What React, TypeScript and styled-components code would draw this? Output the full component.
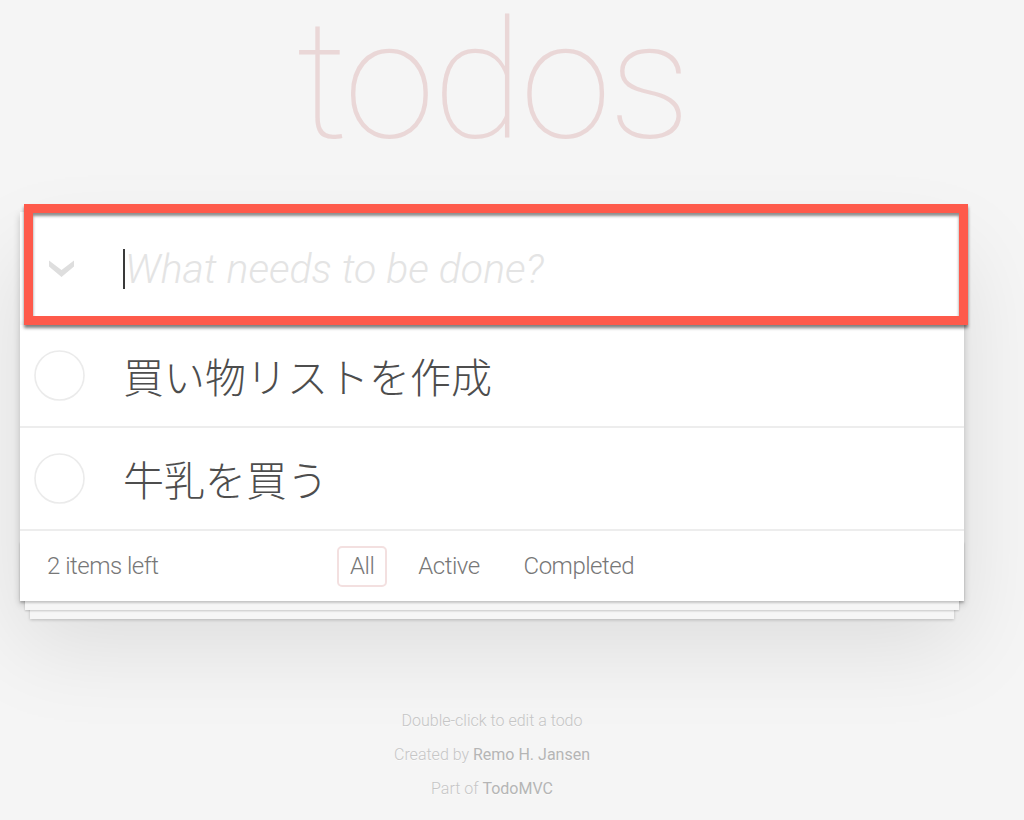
import React from "react";
import styled, { createGlobalStyle } from "styled-components";

const Global = createGlobalStyle`
  html, body { margin: 0; padding: 0; }
  body {
    background: #f5f5f5;
    font-family: "Roboto", "Noto Sans CJK JP", sans-serif;
    font-weight: 300;
    color: #4d4d4d;
    width: 1024px;
    height: 820px;
    overflow: hidden;
    -webkit-font-smoothing: antialiased;
  }
`;

const Page = styled.div`
  width: 944px;
  margin-left: 20px;
  display: flex;
  flex-direction: column;
`;

const Title = styled.h1`
  margin: 0 0 50px;
  height: 162px;
  font-size: 166px;
  line-height: 162px;
  letter-spacing: -3px;
  font-weight: 100;
  text-align: center;
  color: rgba(175, 47, 47, 0.15);
`;

const TodoApp = styled.section`
  position: relative;
  background: #fff;
  box-shadow: 0 3px 7px 0 rgba(0, 0, 0, 0.2), 0 43px 86px 0 rgba(0, 0, 0, 0.1);
`;

const Header = styled.header`
  position: relative;
  height: 113px;
  display: flex;
  align-items: center;
  box-shadow: inset 0 -4px 3px rgba(0, 0, 0, 0.03);
`;

const Highlight = styled.div`
  position: absolute;
  left: 4px;
  top: -8px;
  width: 944px;
  height: 121px;
  box-sizing: border-box;
  border: 9px solid #fe5a4b;
  box-shadow: 0 3px 3px rgba(0, 0, 0, 0.5), inset 0 3px 3px rgba(0, 0, 0, 0.45);
  pointer-events: none;
`;

const ToggleAll = styled.span`
  display: flex;
  width: 27px;
  height: 19px;
  margin-left: 28px;
  margin-right: 48px;
`;

const Caret = styled.span`
  width: 2px;
  height: 40px;
  background: #3a3a3a;
  margin-right: 0;
`;

const Placeholder = styled.span`
  font-size: 41px;
  font-style: italic;
  font-weight: 300;
  color: #e4e4e4;
`;

const List = styled.ul`
  margin: 0;
  padding: 0;
  list-style: none;
`;

const Item = styled.li`
  box-sizing: border-box;
  height: 103px;
  display: flex;
  align-items: center;
  border-bottom: 2px solid #ededed;
`;

const Toggle = styled.span`
  display: flex;
  width: 51px;
  height: 51px;
  margin-left: 14px;
  margin-right: 38px;
`;

const Label = styled.label`
  font-family: "Noto Sans CJK JP", sans-serif;
  font-size: 41px;
  font-weight: 300;
  color: #4d4d4d;
  line-height: 1.2;
`;

const Footer = styled.footer`
  position: relative;
  box-sizing: border-box;
  height: 70px;
  padding: 0 27px;
  display: grid;
  grid-template-columns: 1fr auto 1fr;
  align-items: center;
  color: #777;
  font-size: 24px;
  &::before {
    content: "";
    position: absolute;
    left: 0;
    right: 0;
    bottom: 0;
    height: 60px;
    box-shadow: 0 2px 2px rgba(0, 0, 0, 0.2), 0 14px 0 -5px #f6f6f6,
      0 15px 2px -5px rgba(0, 0, 0, 0.2), 0 28px 0 -10px #f6f6f6,
      0 29px 3px -10px rgba(0, 0, 0, 0.2);
    pointer-events: none;
  }
`;

const Count = styled.span`
  position: relative;
  letter-spacing: -0.5px;
`;

const Filters = styled.ul`
  position: relative;
  margin: 0;
  padding: 0;
  list-style: none;
  display: flex;
  gap: 18px;
  letter-spacing: -0.5px;
`;

const FilterLink = styled.a<{ $selected?: boolean }>`
  display: block;
  padding: 4px 11px;
  line-height: 29px;
  color: inherit;
  text-decoration: none;
  border: 2px solid ${(p) => (p.$selected ? "rgba(175, 47, 47, 0.15)" : "transparent")};
  border-radius: 5px;
`;

const Info = styled.footer`
  margin-top: 111px;
  display: flex;
  flex-direction: column;
  align-items: center;
  gap: 17px;
  font-size: 16px;
  line-height: 17px;
  color: #c6c6c6;
  text-shadow: 0 1px 0 rgba(255, 255, 255, 0.5);
`;

const InfoLine = styled.p`
  margin: 0;
`;

const InfoLink = styled.a`
  color: #b5b5b5;
  font-weight: 400;
  text-decoration: none;
`;

const Chevron = () => (
  <svg width="27" height="19" viewBox="0 0 27 19">
    <path d="M1 1.5 L13.5 11 L26 1.5 L26 7.5 L13.5 18 L1 7.5 Z" fill="#dedede" />
  </svg>
);

const Circle = () => (
  <svg width="51" height="51" viewBox="0 0 51 51">
    <circle cx="25.5" cy="25.5" r="24.5" fill="none" stroke="#ebebeb" strokeWidth="1.6" />
  </svg>
);

const todos = ["買い物リストを作成", "牛乳を買う"];

export default function App() {
  return (
    <>
      <Global />
      <Page>
        <Title>todos</Title>
        <TodoApp>
          <Header>
            <ToggleAll>
              <Chevron />
            </ToggleAll>
            <Caret />
            <Placeholder>What needs to be done?</Placeholder>
            <Highlight />
          </Header>
          <List>
            {todos.map((t) => (
              <Item key={t}>
                <Toggle>
                  <Circle />
                </Toggle>
                <Label>{t}</Label>
              </Item>
            ))}
          </List>
          <Footer>
            <Count>2 items left</Count>
            <Filters>
              <li>
                <FilterLink $selected href="#/">All</FilterLink>
              </li>
              <li>
                <FilterLink href="#/active">Active</FilterLink>
              </li>
              <li>
                <FilterLink href="#/completed">Completed</FilterLink>
              </li>
            </Filters>
            <span />
          </Footer>
        </TodoApp>
        <Info>
          <InfoLine>Double-click to edit a todo</InfoLine>
          <InfoLine>
            Created by <InfoLink href="#">Remo H. Jansen</InfoLink>
          </InfoLine>
          <InfoLine>
            Part of <InfoLink href="#">TodoMVC</InfoLink>
          </InfoLine>
        </Info>
      </Page>
    </>
  );
}
